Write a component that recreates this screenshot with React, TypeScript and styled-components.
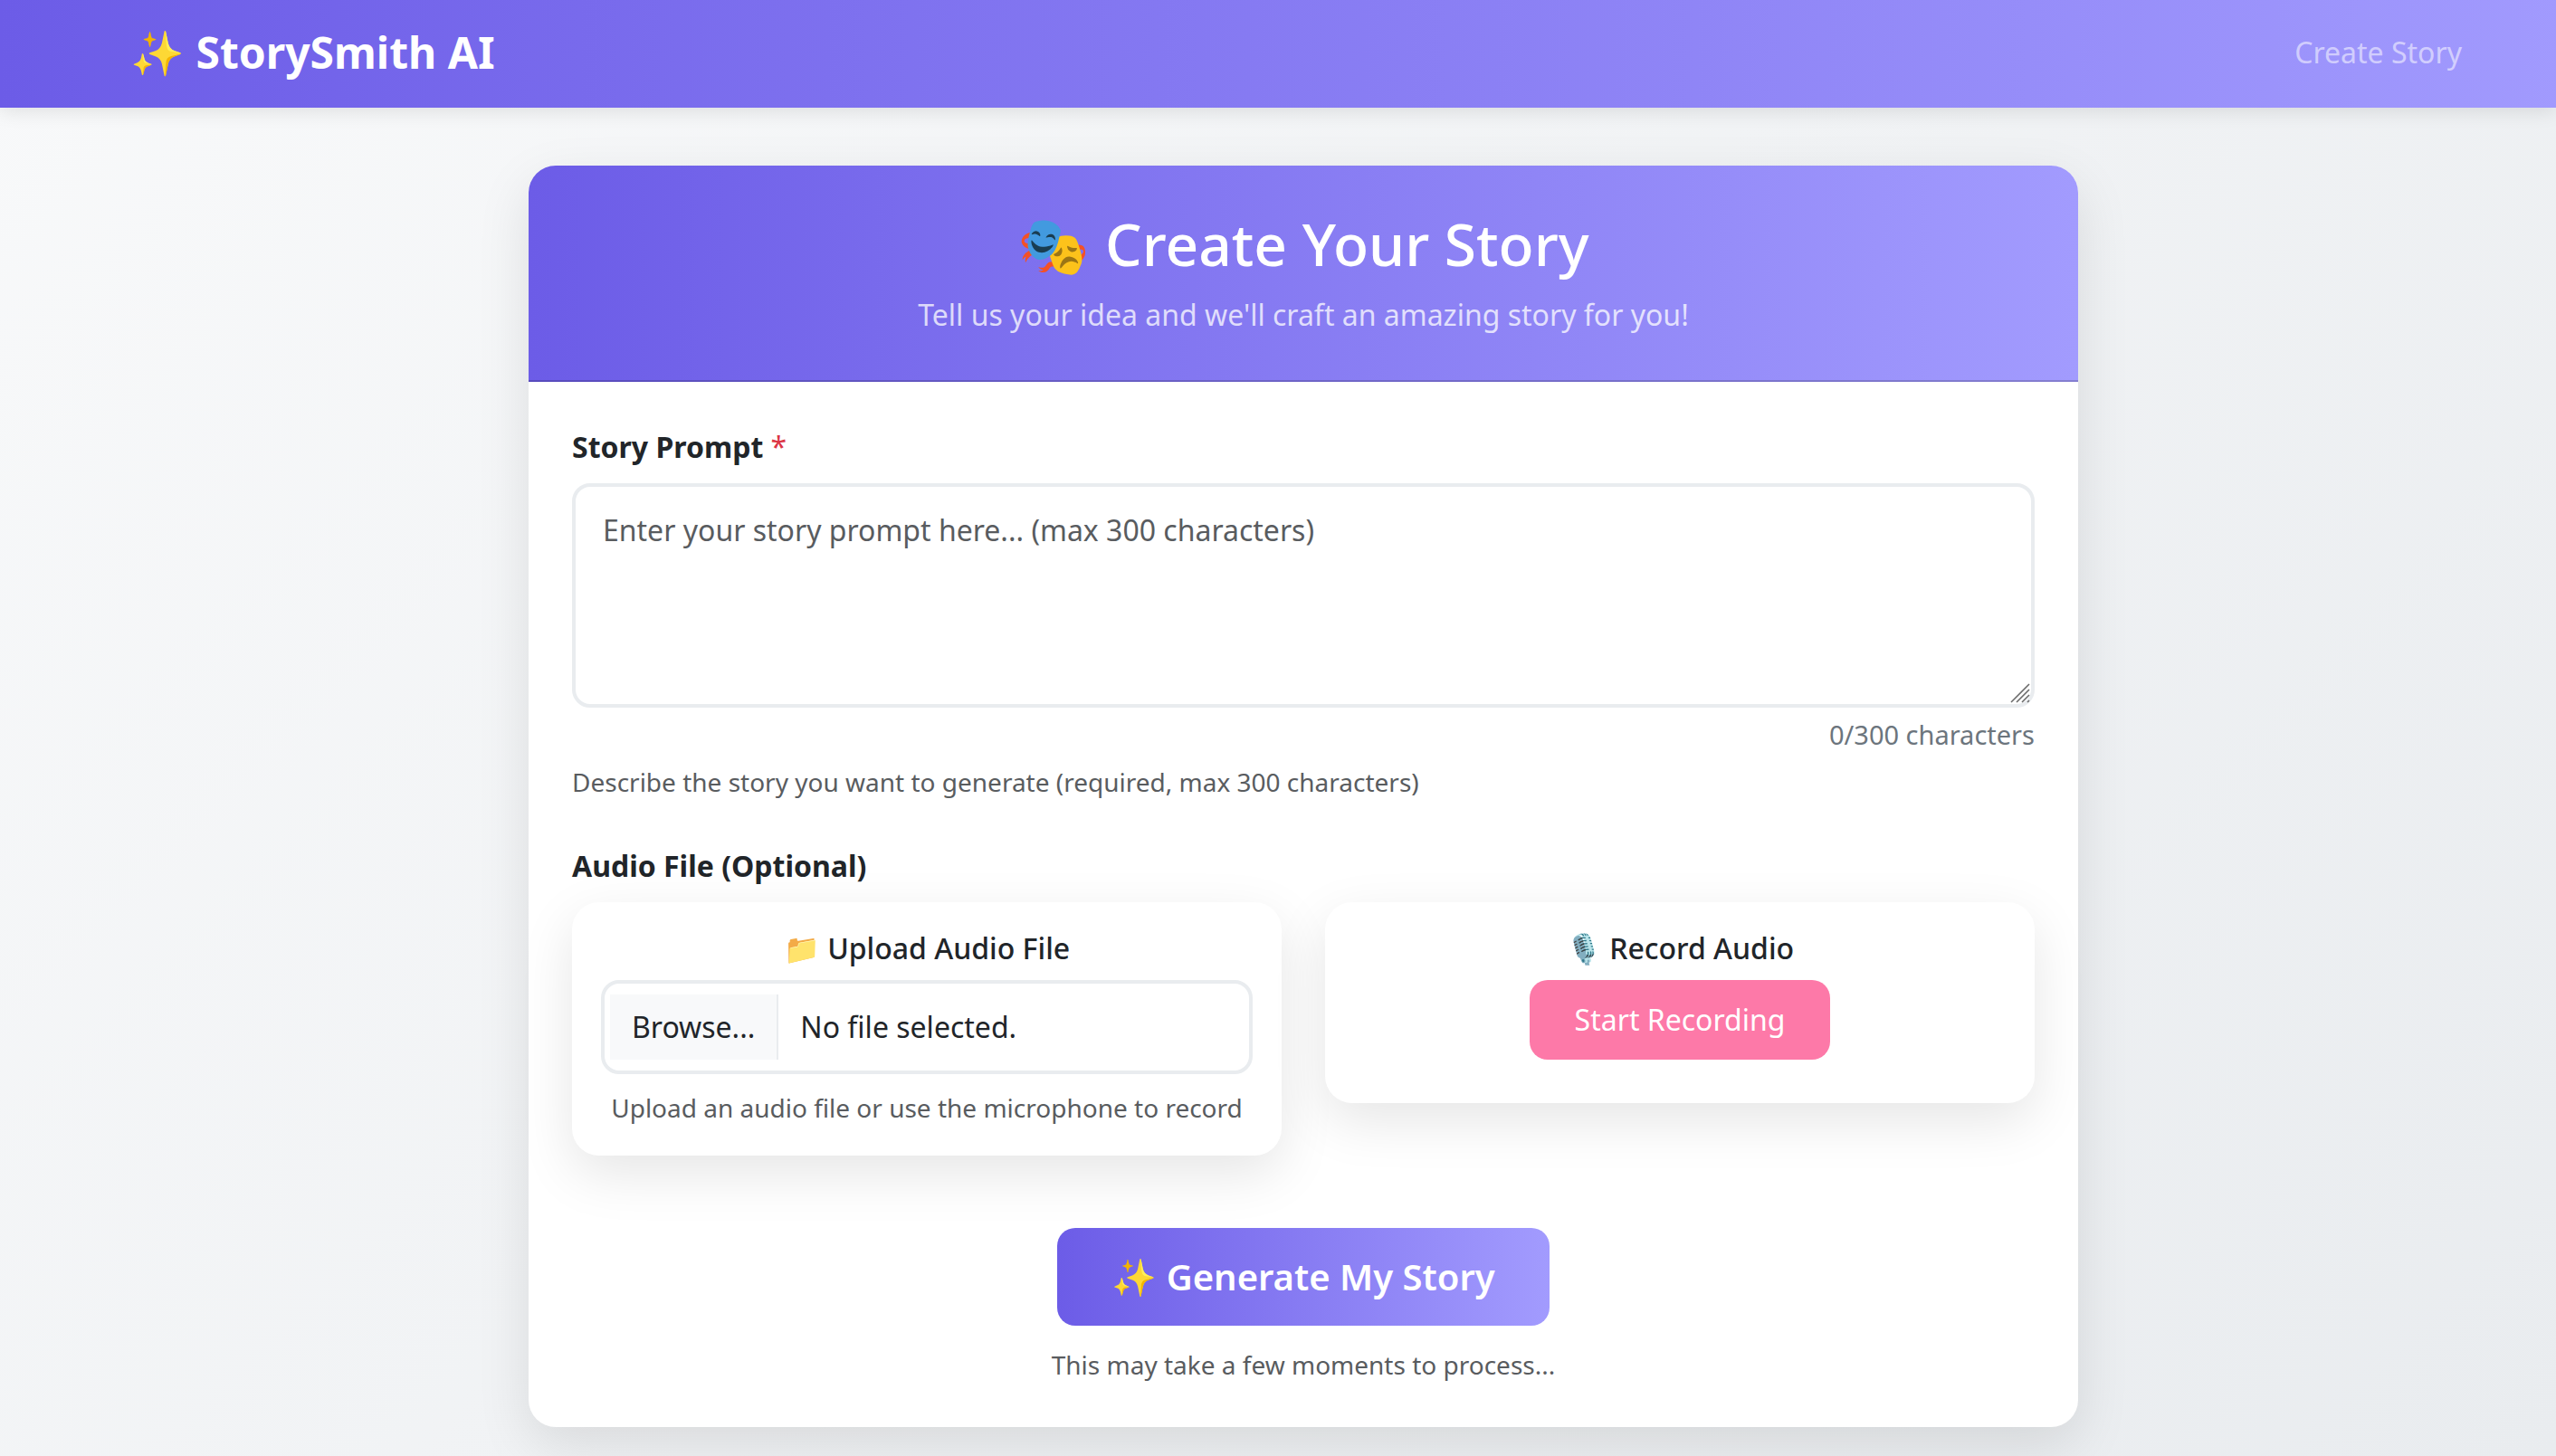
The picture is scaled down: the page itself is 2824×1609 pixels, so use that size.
import React, { useRef, useState } from "react";
import styled, { createGlobalStyle } from "styled-components";

const brandGradient = "linear-gradient(90deg, #6c5ce7 0%, #a29bfe 100%)";
const MAX_CHARS = 300;

const GlobalStyle = createGlobalStyle`
  *, *::before, *::after { box-sizing: border-box; }
  body {
    margin: 0;
    font-family: "Noto Sans", sans-serif;
    font-size: 32px;
    line-height: 48px;
    color: #212529;
  }
  h1, h2, p { margin: 0; }
  button, textarea { font: inherit; }
`;

const Page = styled.div`
  min-height: 100vh;
  background: linear-gradient(135deg, #f8f9fa 0%, #e9ecef 100%);
`;

const Navbar = styled.header`
  display: flex;
  justify-content: center;
  padding: 22px 48px 26px 104px;
  background: ${brandGradient};
  background-size: calc(100% + 56px) 100%;
  box-shadow: 0 4px 20px rgba(0, 0, 0, 0.1);
`;

const NavInner = styled.div`
  display: flex;
  flex: 1;
  align-items: center;
  justify-content: space-between;
  max-width: 2592px;
`;

const Brand = styled.a`
  font-size: 48px;
  line-height: 71px;
  font-weight: 700;
  color: #fff;
  text-decoration: none;
`;

const NavLink = styled.a`
  padding: 0 16px;
  color: rgba(255, 255, 255, 0.55);
  text-decoration: none;
`;

const Main = styled.main`
  display: flex;
  justify-content: center;
  padding: 64px 0 32px 56px;
`;

const StoryCard = styled.section`
  width: 100%;
  max-width: 1712px;
  border-radius: 30px;
  background: #fff;
  box-shadow: 0 20px 60px rgba(0, 0, 0, 0.1);
`;

const CardHeader = styled.div`
  display: flex;
  flex-direction: column;
  gap: 16px;
  padding: 48px;
  text-align: center;
  color: #fff;
  background: ${brandGradient} border-box;
  border-bottom: 2px solid rgba(0, 0, 0, 0.18);
  border-radius: 30px 30px 0 0;
`;

const Title = styled.h1`
  font-size: 64px;
  line-height: 77px;
  font-weight: 500;
`;

const Subtitle = styled.p`
  color: rgba(255, 255, 255, 0.75);
`;

const Form = styled.form`
  display: flex;
  flex-direction: column;
  padding: 48px;
`;

const FieldLabel = styled.label`
  margin-bottom: 16px;
  font-weight: 700;
`;

const Required = styled.span`
  font-weight: 400;
  color: #dc3545;
`;

const PromptBox = styled.div`
  position: relative;
  display: flex;
`;

const PromptInput = styled.textarea`
  flex: 1;
  height: 248px;
  padding: 24px 30px;
  border: 4px solid #e9ecef;
  border-radius: 20px;
  background: #fff;
  color: #212529;
  resize: none;
  outline: none;
  &::placeholder { color: #595c5f; opacity: 1; }
`;

const ResizeGrip = styled.svg`
  position: absolute;
  right: 5px;
  bottom: 5px;
  pointer-events: none;
`;

const Counter = styled.div`
  margin-top: 8px;
  font-size: 29px;
  line-height: 43px;
  text-align: right;
  color: #6c757d;
`;

const HelpText = styled.p<{ $gap: number }>`
  margin-top: ${(p) => p.$gap}px;
  font-size: 28px;
  line-height: 42px;
  color: #595c5f;
`;

const AudioGroup = styled.fieldset`
  display: flex;
  flex-direction: column;
  min-width: 0;
  margin: 48px 0 0;
  padding: 0;
  border: 0;
`;

const GroupTitle = styled.legend`
  padding: 0;
  margin-bottom: 16px;
  font-weight: 700;
`;

const AudioOptions = styled.div`
  display: grid;
  grid-template-columns: 1fr 1fr;
  align-items: start;
  gap: 48px;
`;

const AudioCard = styled.div`
  display: flex;
  flex-direction: column;
  align-items: center;
  padding: 32px;
  border-radius: 30px;
  background: #fff;
  text-align: center;
  box-shadow: 0 20px 60px rgba(0, 0, 0, 0.1);
`;

const AudioTitle = styled.h2`
  margin-bottom: 16px;
  font-size: 32px;
  line-height: 38px;
  font-weight: 500;
`;

const FilePicker = styled.label`
  display: flex;
  align-items: center;
  align-self: stretch;
  gap: 24px;
  padding: 12px 6px;
  border: 4px solid #e9ecef;
  border-radius: 20px;
  background: #fff;
  cursor: pointer;
`;

const HiddenFile = styled.input`
  position: absolute;
  width: 1px;
  height: 1px;
  opacity: 0;
`;

const Browse = styled.span`
  padding: 12px 24px;
  border-right: 2px solid #e9ecef;
  background: #f8f9fa;
`;

const RecordButton = styled.button`
  margin-bottom: 16px;
  padding: 20px 50px;
  border: 0;
  border-radius: 20px;
  background: #fd79a8;
  color: #fff;
  cursor: pointer;
`;

const Submit = styled.div`
  display: flex;
  flex-direction: column;
  align-items: center;
  margin-top: 80px;
`;

const GenerateButton = styled.button`
  padding: 24px 60px;
  border: 0;
  border-radius: 20px;
  background: ${brandGradient};
  color: #fff;
  font-size: 40px;
  line-height: 60px;
  font-weight: 600;
  cursor: pointer;
`;

export default function App() {
  const [prompt, setPrompt] = useState("");
  const [fileName, setFileName] = useState("");
  const [recording, setRecording] = useState(false);
  const fileRef = useRef<HTMLInputElement>(null);

  return (
    <>
      <GlobalStyle />
      <Page>
        <Navbar>
          <NavInner>
            <Brand href="#">✨ StorySmith AI</Brand>
            <nav>
              <NavLink href="#create">Create Story</NavLink>
            </nav>
          </NavInner>
        </Navbar>
        <Main>
          <StoryCard id="create">
            <CardHeader>
              <Title>🎭 Create Your Story</Title>
              <Subtitle>Tell us your idea and we'll craft an amazing story for you!</Subtitle>
            </CardHeader>
            <Form onSubmit={(e) => e.preventDefault()}>
              <FieldLabel htmlFor="prompt">
                Story Prompt <Required>*</Required>
              </FieldLabel>
              <PromptBox>
                <PromptInput
                  id="prompt"
                  required
                  maxLength={MAX_CHARS}
                  placeholder="Enter your story prompt here... (max 300 characters)"
                  value={prompt}
                  onChange={(e) => setPrompt(e.target.value)}
                />
                <ResizeGrip width="22" height="22" viewBox="0 0 22 22" aria-hidden="true">
                  <path
                    d="M1 21L21 1M7 21L21 7M13 21L21 13M19 21L21 19"
                    stroke="#6b6b6b"
                    strokeWidth="1.6"
                    fill="none"
                  />
                </ResizeGrip>
              </PromptBox>
              <Counter>{`${prompt.length}/${MAX_CHARS} characters`}</Counter>
              <HelpText $gap={10}>
                Describe the story you want to generate (required, max 300 characters)
              </HelpText>

              <AudioGroup>
                <GroupTitle>Audio File (Optional)</GroupTitle>
                <AudioOptions>
                  <AudioCard>
                    <AudioTitle>📁 Upload Audio File</AudioTitle>
                    <FilePicker htmlFor="audio">
                      <HiddenFile
                        id="audio"
                        ref={fileRef}
                        type="file"
                        accept="audio/*"
                        onChange={() => setFileName(fileRef.current?.files?.[0]?.name ?? "")}
                      />
                      <Browse>Browse...</Browse>
                      <span>{fileName || "No file selected."}</span>
                    </FilePicker>
                    <HelpText $gap={16}>Upload an audio file or use the microphone to record</HelpText>
                  </AudioCard>
                  <AudioCard>
                    <AudioTitle>🎙️ Record Audio</AudioTitle>
                    <RecordButton type="button" onClick={() => setRecording(!recording)}>
                      {recording ? "Stop Recording" : "Start Recording"}
                    </RecordButton>
                  </AudioCard>
                </AudioOptions>
              </AudioGroup>

              <Submit>
                <GenerateButton type="submit">✨ Generate My Story</GenerateButton>
                <HelpText $gap={22}>This may take a few moments to process...</HelpText>
              </Submit>
            </Form>
          </StoryCard>
        </Main>
      </Page>
    </>
  );
}
